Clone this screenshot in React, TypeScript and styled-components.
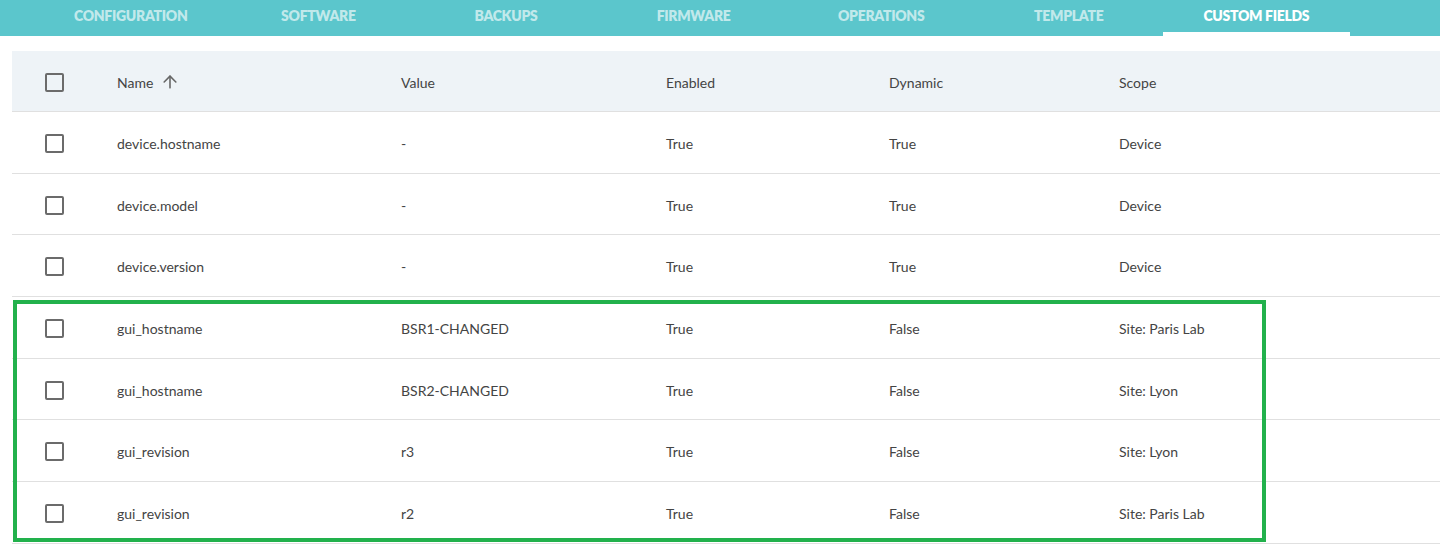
import React from 'react';
import styled, { createGlobalStyle } from 'styled-components';
import { ArrowUp } from 'lucide-react';

const GlobalStyle = createGlobalStyle`
  html, body {
    margin: 0;
    padding: 0;
    background: #ffffff;
    font-family: Lato, "Noto Sans", "Liberation Sans", sans-serif;
    color: #444444;
  }
`;

const TabBar = styled.div`
  height: 36px;
  background-color: #5bc6cc;
  display: flex;
  padding-left: 37px;
`;

const Tab = styled.div<{ $active?: boolean }>`
  width: 187.6px;
  display: flex;
  justify-content: center;
  align-items: flex-start;
  padding-top: 7px;
  box-sizing: border-box;
  font-size: 14px;
  font-weight: 800;
  letter-spacing: -0.3px;
  text-transform: uppercase;
  color: ${props => (props.$active ? '#ffffff' : 'rgba(255, 255, 255, 0.64)')};
  border-bottom: 4px solid ${props => (props.$active ? '#ffffff' : 'transparent')};
  cursor: pointer;
`;

const TableWrap = styled.div`
  position: relative;
  margin: 15px 0 0 12px;
`;

const columns = '105px 284px 265px 223px 230px 1fr';

const HeaderRow = styled.div`
  display: grid;
  grid-template-columns: ${columns};
  align-items: center;
  height: 61px;
  padding-top: 2px;
  background-color: #eef3f7;
  border-bottom: 1px solid #e0e0e0;
  box-sizing: border-box;
`;

const Row = styled.div`
  display: grid;
  grid-template-columns: ${columns};
  align-items: center;
  height: 61.7px;
  padding-top: 2px;
  border-bottom: 1px solid #e0e0e0;
  box-sizing: border-box;
`;

const Cell = styled.div`
  font-size: 14px;
  color: #444444;
  display: flex;
  align-items: center;
  gap: 7px;
`;

const CheckCell = styled.div`
  padding-left: 33px;
  display: flex;
  align-items: center;
`;

const Checkbox = styled.span`
  width: 19px;
  height: 19px;
  box-sizing: border-box;
  border: 2px solid #6b6b6b;
  border-radius: 2px;
  display: inline-block;
`;

const Highlight = styled.div`
  position: absolute;
  left: 1px;
  top: 249px;
  width: 1253px;
  height: 242px;
  box-sizing: border-box;
  border: 4px solid #22b14c;
  pointer-events: none;
`;

const tabs = ['Configuration', 'Software', 'Backups', 'Firmware', 'Operations', 'Template', 'Custom Fields'];

const rows = [
  ['device.hostname', '-', 'True', 'True', 'Device'],
  ['device.model', '-', 'True', 'True', 'Device'],
  ['device.version', '-', 'True', 'True', 'Device'],
  ['gui_hostname', 'BSR1-CHANGED', 'True', 'False', 'Site: Paris Lab'],
  ['gui_hostname', 'BSR2-CHANGED', 'True', 'False', 'Site: Lyon'],
  ['gui_revision', 'r3', 'True', 'False', 'Site: Lyon'],
  ['gui_revision', 'r2', 'True', 'False', 'Site: Paris Lab'],
];

export default function App() {
  return (
    <>
      <GlobalStyle />
      <TabBar>
        {tabs.map(t => (
          <Tab key={t} $active={t === 'Custom Fields'}>
            {t}
          </Tab>
        ))}
      </TabBar>
      <TableWrap>
        <HeaderRow>
          <CheckCell>
            <Checkbox />
          </CheckCell>
          <Cell>
            Name <ArrowUp size={20} strokeWidth={1.9} color="#666" />
          </Cell>
          <Cell>Value</Cell>
          <Cell>Enabled</Cell>
          <Cell>Dynamic</Cell>
          <Cell>Scope</Cell>
        </HeaderRow>
        {rows.map((r, i) => (
          <Row key={i}>
            <CheckCell>
              <Checkbox />
            </CheckCell>
            {r.map((v, j) => (
              <Cell key={j}>{v}</Cell>
            ))}
          </Row>
        ))}
        <Highlight />
      </TableWrap>
    </>
  );
}
